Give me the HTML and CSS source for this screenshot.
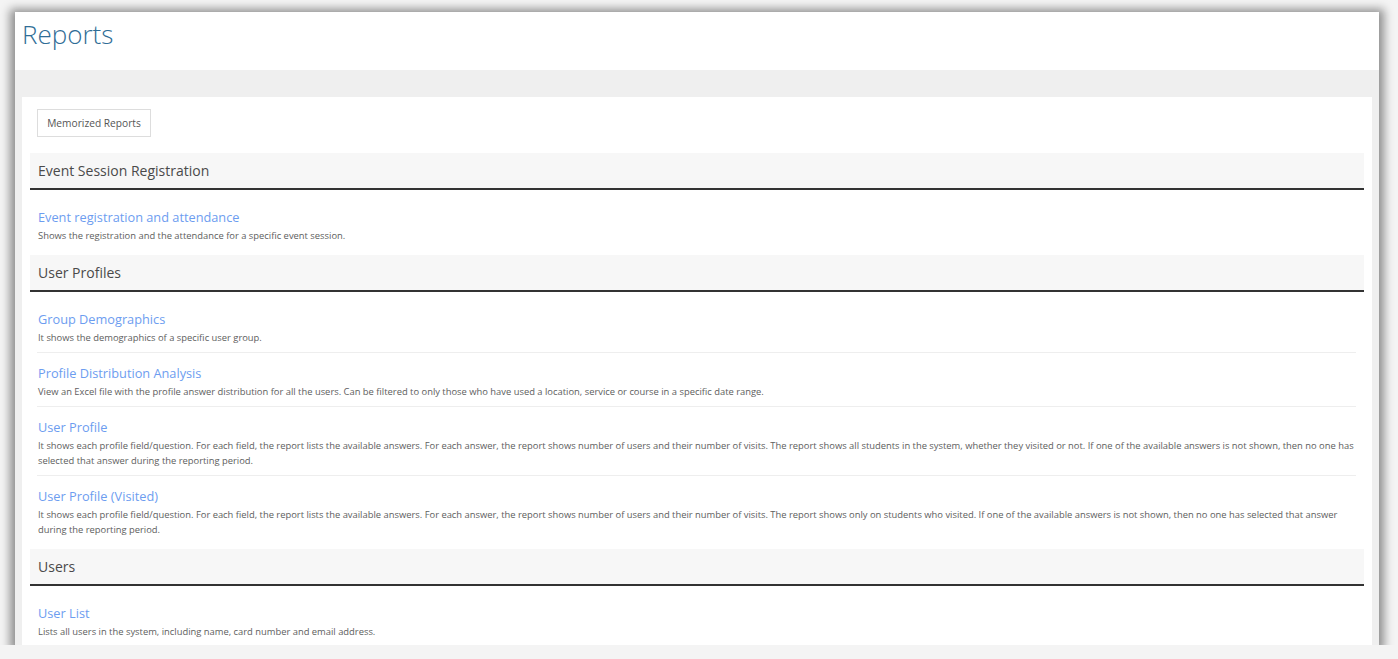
FILE: index.html
```html
<!DOCTYPE html>
<html lang="en">

<head>
    <meta charset="UTF-8">
    <meta name="viewport" content="width=device-width, initial-scale=1.0">
    <title>Reports</title>
    <link rel="stylesheet" href="styles.css">
</head>

<body>
    <div class="frame">
        <div class="page-header">
            <h1 class="page-title">Reports</h1>
        </div>

        <div class="page-body">
            <div class="card">
                <div class="toolbar">
                    <button class="btn">Memorized Reports</button>
                </div>

                <!-- Event Session Registration -->
                <h2 class="section-title">Event Session Registration</h2>
                <ul class="report-list">
                    <li class="report">
                        <a class="report-link" href="#">Event registration and attendance</a>
                        <p class="report-desc">Shows the registration and the attendance for a specific event session.</p>
                    </li>
                </ul>

                <!-- User Profiles -->
                <h2 class="section-title">User Profiles</h2>
                <ul class="report-list">
                    <li class="report">
                        <a class="report-link" href="#">Group Demographics</a>
                        <p class="report-desc">It shows the demographics of a specific user group.</p>
                    </li>
                    <li class="report">
                        <a class="report-link" href="#">Profile Distribution Analysis</a>
                        <p class="report-desc">View an Excel file with the profile answer distribution for all the users. Can be filtered to only those who have used a location, service or course in a specific date range.</p>
                    </li>
                    <li class="report">
                        <a class="report-link" href="#">User Profile</a>
                        <p class="report-desc">It shows each profile field/question. For each field, the report lists the available answers. For each answer, the report shows number of users and their number of visits. The report shows all students in the system, whether they visited or not. If one of the available answers is not shown, then no one has selected that answer during the reporting period.</p>
                    </li>
                    <li class="report">
                        <a class="report-link" href="#">User Profile (Visited)</a>
                        <p class="report-desc">It shows each profile field/question. For each field, the report lists the available answers. For each answer, the report shows number of users and their number of visits. The report shows only on students who visited. If one of the available answers is not shown, then no one has selected that answer during the reporting period.</p>
                    </li>
                </ul>

                <!-- Users -->
                <h2 class="section-title">Users</h2>
                <ul class="report-list">
                    <li class="report">
                        <a class="report-link" href="#">User List</a>
                        <p class="report-desc">Lists all users in the system, including name, card number and email address.</p>
                    </li>
                </ul>
            </div>
        </div>
    </div>
</body>

</html>
```

FILE: styles.css
```css
body {
    margin: 0;
    background: #f4f4f4;
    font-family: "Open Sans", "Noto Sans", sans-serif;
    overflow: hidden;
}

.frame {
    margin: 12px 19px 0 15px;
    height: 633px;
    background: #efefef;
    overflow: hidden;
    box-shadow: 0 2px 9px 5px rgba(0, 0, 0, 0.42);
}

.page-header {
    height: 58px;
    background: #fff;
    padding-left: 7px;
}

.page-title {
    margin: 0;
    font-size: 26px;
    font-weight: 300;
    line-height: 44px;
    color: #2f6d96;
}

.page-body {
    padding: 27px 7px 0 7px;
}

.card {
    background: #fff;
    padding: 12px 8px 20px 8px;
}

.toolbar {
    padding-left: 7px;
    margin-bottom: 16px;
}

.btn {
    font-family: inherit;
    font-size: 10.2px;
    color: #555;
    background: #fff;
    border: 1px solid #ddd;
    height: 28px;
    width: 114px;
    padding: 0;
}

.section-title {
    margin: 0;
    height: 35px;
    line-height: 35px;
    padding-left: 8px;
    font-size: 14px;
    font-weight: 400;
    color: #4a4a4a;
    background: #f7f7f7;
    border-bottom: 2px solid #333;
}

.report-list {
    list-style: none;
    margin: 0;
    padding: 7px 8px 5px 7px;
}

.report {
    padding: 9px 0 7px 1px;
    border-bottom: 1px solid #eee;
}

.report:last-child {
    border-bottom: none;
}

.report-link {
    display: block;
    font-size: 12.75px;
    line-height: 22px;
    color: #6d9df0;
    text-decoration: none;
}

.report-desc {
    margin: 0;
    font-size: 9.4px;
    line-height: 15px;
    color: #5e5e5e;
}
```
